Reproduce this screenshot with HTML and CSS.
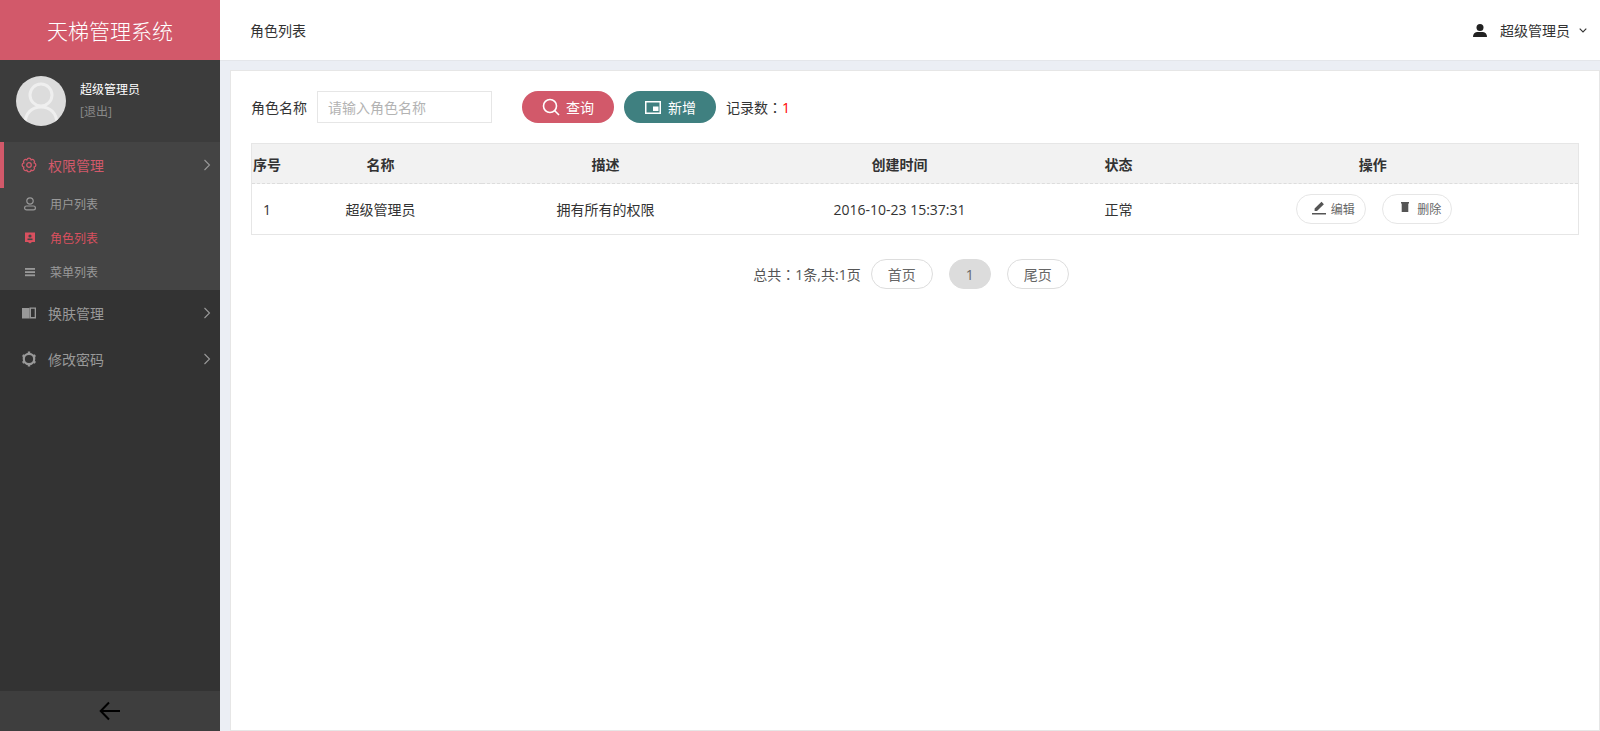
FILE: index.html
```html
<!DOCTYPE html>
<html lang="zh">
<head>
<meta charset="utf-8">
<title>天梯管理系统</title>
<link rel="stylesheet" href="styles.css">
</head>
<body>
<div class="app">
  <aside class="sidebar">
    <div class="brand">天梯管理系统</div>
    <div class="profile">
      <svg class="avatar" viewBox="0 0 50 50"><defs><clipPath id="c"><circle cx="25" cy="25" r="25"/></clipPath></defs><circle cx="25" cy="25" r="25" fill="#dcdcdc"/><g clip-path="url(#c)" fill="none" stroke="#efefef" stroke-width="3"><circle cx="25" cy="19" r="11"/><path d="M9 48c0-11 7-17 16-17s16 6 16 17"/></g></svg>
      <div class="who">
        <div class="who-name">超级管理员</div>
        <div class="who-exit">[退出]</div>
      </div>
    </div>
    <nav class="nav">
      <div class="group">
        <div class="item active">
          <svg class="ico" viewBox="0 0 16 16" fill="none" stroke="currentColor" stroke-width="1.300"><path d="M5.860 2.830A2.200 2.200 0 0 1 10.140 2.830A2.200 2.200 0 0 1 13.170 5.860A2.200 2.200 0 0 1 13.170 10.140A2.200 2.200 0 0 1 10.140 13.170A2.200 2.200 0 0 1 5.860 13.170A2.200 2.200 0 0 1 2.830 10.140A2.200 2.200 0 0 1 2.830 5.860A2.200 2.200 0 0 1 5.860 2.830z"/><circle cx="8" cy="8" r="2.300"/></svg>
          <span class="label">权限管理</span>
          <svg class="chev" viewBox="0 0 8 12"><path d="M1.500 1l5 5-5 5" fill="none" stroke="currentColor" stroke-width="1.100"/></svg>
        </div>
        <div class="sub"><svg class="sico" viewBox="0 0 14 14" fill="none" stroke="currentColor" stroke-width="1.200"><circle cx="7" cy="4" r="3.200"/><rect x="1.600" y="9" width="10.800" height="3.800" rx="1.900"/></svg><span>用户列表</span></div>
        <div class="sub current"><svg class="sico" viewBox="0 0 14 14"><path fill="currentColor" d="M2 1.500h10v9.500H9L7 12.500 5 11H2z"/><circle cx="7" cy="5" r="1.600" fill="#444"/><rect x="4.500" y="7.500" width="5" height="1.600" fill="#444"/></svg><span>角色列表</span></div>
        <div class="sub"><svg class="sico" viewBox="0 0 14 14" fill="currentColor"><rect x="2" y="3" width="10" height="1.800"/><rect x="2" y="6.200" width="10" height="1.800"/><rect x="2" y="9.400" width="10" height="1.800"/></svg><span>菜单列表</span></div>
      </div>
      <div class="item">
        <svg class="ico" viewBox="0 0 16 16"><path fill="currentColor" d="M1 3h7.500v10.500H1z"/><path fill="currentColor" fill-rule="evenodd" d="M8.500 2.500h6.500v11H8.500zM10 3.800v8.200h3.700V3.800z"/></svg>
        <span class="label">换肤管理</span>
        <svg class="chev" viewBox="0 0 8 12"><path d="M1.500 1l5 5-5 5" fill="none" stroke="currentColor" stroke-width="1.100"/></svg>
      </div>
      <div class="item">
        <svg class="ico" viewBox="0 0 16 16" fill="none" stroke="currentColor"><circle cx="8" cy="8" r="5.200" stroke-width="2.200"/><path d="M8 .6v2M8 13.400v2M1.600 4.300l1.700 1M12.700 10.700l1.700 1M1.600 11.700l1.700-1M12.700 5.300l1.700-1" stroke-width="2.400"/></svg>
        <span class="label">修改密码</span>
        <svg class="chev" viewBox="0 0 8 12"><path d="M1.500 1l5 5-5 5" fill="none" stroke="currentColor" stroke-width="1.100"/></svg>
      </div>
    </nav>
    <div class="collapse"><svg class="back" viewBox="0 0 22 20"><path d="M21 10H2M10 1.500L1.700 10l8.300 8.500" fill="none" stroke="#000" stroke-width="2"/></svg></div>
  </aside>
  <div class="main">
    <header class="topbar">
      <div class="crumb">角色列表</div>
      <div class="user">
        <svg class="user-ico" viewBox="0 0 14 13" fill="#222"><circle cx="7" cy="3.500" r="3.500"/><path d="M0 13c0-3 1.500-4.500 4-5h6c2.500.5 4 2 4 5z"/></svg>
        <span>超级管理员</span>
        <svg class="user-caret" viewBox="0 0 8 5"><path d="M.7.700L4 4l3.300-3.300" fill="none" stroke="#333" stroke-width="1.100"/></svg>
      </div>
    </header>
    <section class="panel">
      <div class="toolbar">
        <label class="field-label">角色名称</label>
        <input class="field" type="text" placeholder="请输入角色名称">
        <button class="btn btn-red"><svg class="btn-ico" viewBox="0 0 18 18" fill="none" stroke="#fff" stroke-width="1.600"><circle cx="8" cy="8" r="6.500"/><path d="M12.500 12.500l4.500 4.500"/></svg>查询</button>
        <button class="btn btn-teal"><svg class="btn-ico" viewBox="0 0 18 18"><path fill="#fff" fill-rule="evenodd" d="M1 3h16v13H1zM2.500 4.500v10h13v-10z"/><rect x="9" y="8.500" width="5.500" height="4.500" fill="#fff"/></svg>新增</button>
        <span class="count">记录数<span class="fw" lang="zh-Hant">：</span><em>1</em></span>
      </div>
      <table class="grid">
        <colgroup><col class="c1"><col class="c2"><col class="c3"><col class="c4"><col class="c5"><col class="c6"></colgroup>
        <thead><tr><th class="first">序号</th><th>名称</th><th>描述</th><th>创建时间</th><th>状态</th><th>操作</th></tr></thead>
        <tbody><tr>
          <td class="num">1</td><td>超级管理员</td><td>拥有所有的权限</td><td>2016-10-23 15:37:31</td><td>正常</td>
          <td>
            <div class="ops">
              <a class="op op-edit"><svg viewBox="0 0 14 14" class="op-ico"><path fill="#555" d="M9.500 .8l2.400 2.400L5 10H2.600V7.600zM0 12h14v1.500H0z"/></svg>编辑</a>
              <a class="op op-del"><svg viewBox="0 0 8 10" class="op-ico2"><path fill="#555" d="M0 0h8v1.500H7.300V10H.7V1.500H0z"/></svg>删除</a>
            </div>
          </td>
        </tr></tbody>
      </table>
      <div class="pager">
        <span class="total">总共<span class="fw" lang="zh-Hant">：</span>1条,共:1页</span>
        <a class="page">首页</a>
        <a class="page on">1</a>
        <a class="page">尾页</a>
      </div>
    </section>
  </div>
</div>
</body>
</html>
```
FILE: styles.css
```css
* { box-sizing: border-box; }
html, body { margin: 0; height: 100%; overflow: hidden; }
body { font-family: "Open Sans", "Noto Sans CJK SC", sans-serif; font-size: 14px; color: #333; }
.fw { font-family: "Noto Sans CJK TC", sans-serif; }
.app { display: flex; height: 731px; background: #ebeef4; }
.sidebar { width: 220px; flex: none; display: flex; flex-direction: column; background: #333; }
.brand { height: 60px; background: #d2596a; color: #fff; font-size: 21px; font-weight: 300; display: flex; align-items: center; justify-content: center; }
.profile { height: 82px; background: #3c3c3c; display: flex; align-items: center; padding: 0 16px; gap: 14px; }
.avatar { width: 50px; height: 50px; flex: none; }
.who-name { color: #fff; font-size: 12px; line-height: 16px; margin-bottom: 6px; }
.who-exit { color: #888; font-size: 12px; line-height: 16px; }
.nav { flex: 1; }
.group { background: #444; height: 148px; }
.item { height: 46px; display: flex; align-items: center; padding-left: 21px; color: #999; font-size: 14px; }
.item.active { color: #d2596a; border-left: 4px solid #d2596a; padding-left: 17px; margin-bottom: -1px; }
.ico { width: 16px; height: 16px; flex: none; margin-right: 11px; }
.label { flex: 1; }
.chev { width: 8px; height: 12px; color: #999; margin-right: 9px; }
.sub { height: 34px; display: flex; align-items: center; padding-left: 23px; color: #999; font-size: 12px; }
.sub.current { color: #d9505f; }
.sico { width: 14px; height: 14px; margin-right: 13px; flex: none; }
.collapse { height: 40px; background: #3e3e3e; display: flex; align-items: center; justify-content: center; }
.back { width: 22px; height: 20px; }
.main { flex: 1; display: flex; flex-direction: column; min-width: 0; }
.topbar { height: 61px; background: #fff; border-bottom: 1px solid #e4e6ea; display: flex; align-items: center; justify-content: space-between; padding: 0 13px 0 30px; color: #333; }
.user { display: flex; align-items: center; }
.user-ico { width: 14px; height: 13px; margin-right: 13px; }
.user-caret { width: 8px; height: 5px; margin-left: 9px; }
.panel { flex: 1; margin: 9px 0 0 10px; background: #fff; border: 1px solid #e6e6e6; padding: 20px 20px 0 20px; }
.toolbar { display: flex; align-items: center; height: 32px; }
.field-label { width: 66px; color: #333; }
.field { width: 175px; height: 32px; border: 1px solid #e6e6e6; padding: 0 10px; font: inherit; outline: none; margin-right: 30px; }
.field::placeholder { color: #b3b3b3; }
.btn { width: 92px; height: 32px; border: 0; border-radius: 16px; color: #fff; font: inherit; display: flex; align-items: center; justify-content: center; margin-right: 10px; padding: 0; }
.btn-red { background: #d2596a; }
.btn-teal { background: #3f8080; }
.btn-ico { width: 18px; height: 18px; margin-right: 6px; }
.count em { color: #f00; font-style: normal; }
.grid { width: 1327px; margin-top: 20px; border-collapse: collapse; table-layout: fixed; border: 1px solid #e6e6e6; }
.c1 { width: 28px; } .c2 { width: 202px; } .c3 { width: 248px; } .c4 { width: 340px; } .c5 { width: 98px; } .c6 { width: 411px; }
th { height: 40px; background: #f2f2f2; font-weight: 700; text-align: center; color: #333; padding: 0; border-top: 1px dashed #ddd; border-bottom: 1px dashed #ddd; white-space: nowrap; }
th.first { text-align: left; padding-left: 1px; }
td { height: 51px; text-align: center; padding: 0; color: #333; }
td.num { text-align: left; padding-left: 11px; }
.ops { display: flex; justify-content: center; gap: 16px; padding-left: 3px; }
.op { display: flex; align-items: center; justify-content: center; width: 70px; height: 30px; border: 1px solid #e6e6e6; border-radius: 15px; font-size: 12px; color: #666; }
.op-edit { padding-left: 4px; }
.op-del { padding-left: 8px; }
.op-ico { width: 14px; height: 14px; margin-right: 5px; margin-top: -2px; }
.op-ico2 { width: 8px; height: 10px; margin-right: 8px; margin-top: -4px; }
.pager { display: flex; align-items: center; justify-content: center; margin-top: 24px; height: 30px; gap: 16px; padding-right: 8px; }
.total { color: #555; margin-right: -6px; }
.page { height: 30px; border: 1px solid #ddd; border-radius: 15px; color: #666; display: flex; align-items: center; justify-content: center; width: 62px; }
.page.on { width: 42px; background: #dcdcdc; border-color: #dcdcdc; }
```
